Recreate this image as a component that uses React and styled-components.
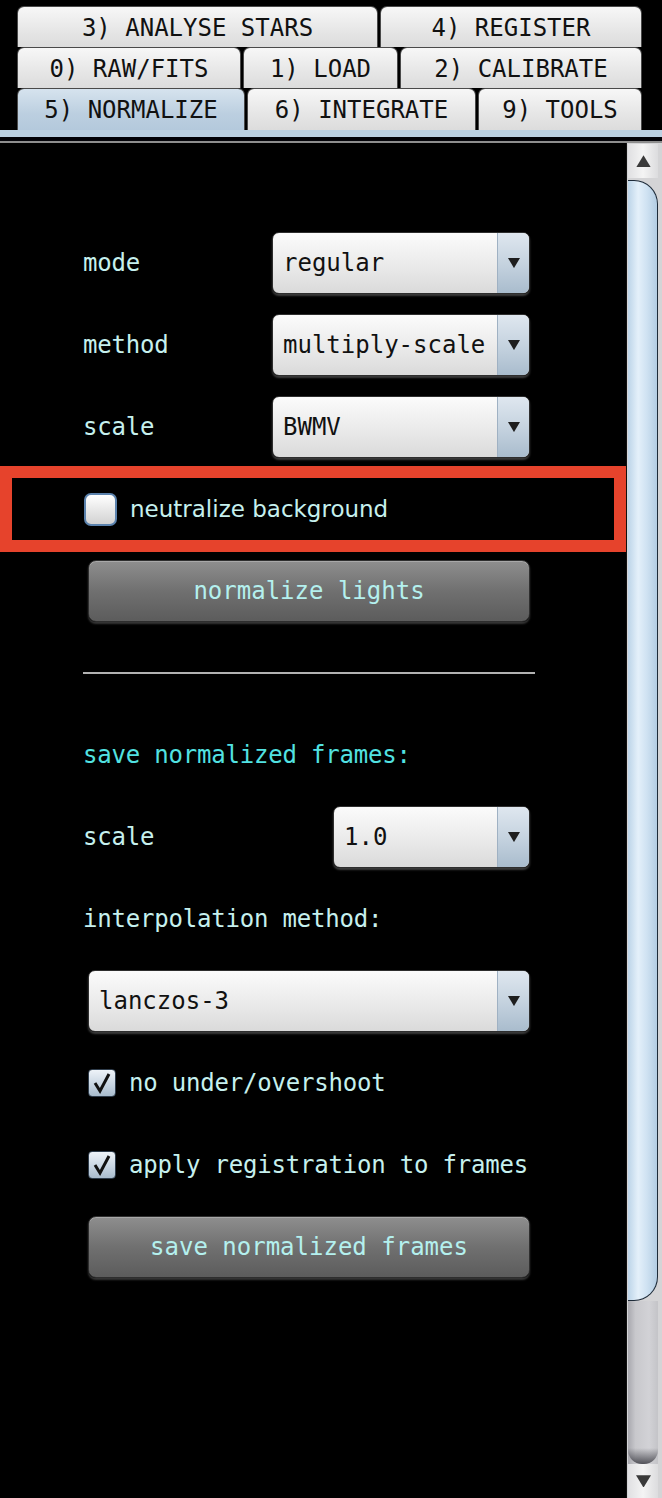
import React from "react";
import styled, { createGlobalStyle } from "styled-components";

const GlobalStyle = createGlobalStyle`
  html, body {
    margin: 0;
    padding: 0;
    background: #000;
  }
  * { box-sizing: border-box; }
`;

const MONO = `"DejaVu Sans Mono", "Liberation Mono", monospace`;
const SANS = `"DejaVu Sans", "Liberation Sans", sans-serif`;

const Screen = styled.div`
  width: 662px;
  height: 1498px;
  display: flex;
  flex-direction: column;
  background: #000;
  overflow: hidden;
`;

const TabBar = styled.div`
  height: 130px;
  padding-top: 6px;
  display: flex;
  flex-direction: column;
`;

const TabRow = styled.div`
  display: flex;
  gap: 2px;
  padding-left: 17px;
  height: ${(p) => p.h || 41}px;
`;

const Tab = styled.div`
  width: ${(p) => p.w}px;
  height: 100%;
  display: flex;
  align-items: center;
  justify-content: center;
  padding-top: 1px;
  border: 1px solid #4a4a4a;
  border-bottom: none;
  border-radius: 7px 7px 0 0;
  background: ${(p) =>
    p.active
      ? "linear-gradient(#d6e3ee, #bccfe0 60%, #b4c9dc)"
      : "linear-gradient(#f7f7f7, #e6e6e6 60%, #dcdcdc)"};
  font-family: ${MONO};
  font-size: 24px;
  color: #111;
  white-space: nowrap;
`;

const TabStrip = styled.div`
  height: 7px;
  background: #bdd2e4;
`;

const TabDivider = styled.div`
  height: 6px;
  background: #05050a;
  border-bottom: 2px solid #8e8e8e;
`;

const Main = styled.div`
  flex: 1;
  display: flex;
  min-height: 0;
`;

const Panel = styled.div`
  flex: 1;
  min-width: 0;
  background: #000;
  padding: 89px 96px 0 83px;
  display: flex;
  flex-direction: column;
  gap: 20px;
`;

const Row = styled.div`
  height: 62px;
  display: flex;
  align-items: center;
  justify-content: space-between;
  padding-left: ${(p) => p.indent || 0}px;
`;

const HighlightRow = styled(Row)`
  margin: 0 -84px 0 -71px;
  padding-left: 72px;
  outline: 12px solid #e6432c;
`;

const Label = styled.span`
  font-family: ${MONO};
  font-size: 24px;
  letter-spacing: -0.2px;
  color: ${(p) => (p.accent ? "#52e2e2" : "#c6f0ee")};
  white-space: nowrap;
`;

const SelectBox = styled.div`
  width: ${(p) => p.w}px;
  height: 62px;
  flex-shrink: 0;
  display: flex;
  border: 1.5px solid #2e2e2e;
  border-radius: 7px;
  overflow: hidden;
  background: linear-gradient(#fbfbfb, #eaeaea 55%, #dadada);
  box-shadow: 0 2px 2px rgba(120, 120, 120, 0.5);
`;

const SelectValue = styled.div`
  flex: 1;
  display: flex;
  align-items: center;
  padding-left: 10px;
  font-family: ${MONO};
  font-size: 24px;
  color: #111;
  white-space: nowrap;
`;

const SelectArrow = styled.div`
  width: 32px;
  display: flex;
  align-items: center;
  justify-content: center;
  border-left: 1px solid #9fb1c3;
  background: linear-gradient(#dfe7ef, #c3d1de 55%, #a9bccd);
`;

const Button = styled.div`
  height: 62px;
  margin-left: 5px;
  display: flex;
  align-items: center;
  justify-content: center;
  border: 1.5px solid #2e2e2e;
  border-radius: 8px;
  background: linear-gradient(#8e8e8e, #707070 50%, #5c5c5c);
  box-shadow: inset 0 1px 0 #a8a8a8, 0 2px 2px rgba(90, 90, 90, 0.6);
  font-family: ${MONO};
  font-size: 24px;
  color: #b4f0ee;
`;

const Separator = styled.div`
  height: 62px;
  margin-right: -5px;
  display: flex;
  align-items: center;
  &::after {
    content: "";
    flex: 1;
    height: 2px;
    background: #b2b2b2;
  }
`;

const CheckLine = styled.div`
  display: flex;
  align-items: center;
  gap: 13px;
`;

const Box = styled.div`
  width: ${(p) => (p.checked ? 28 : 33)}px;
  height: ${(p) => (p.checked ? 28 : 33)}px;
  flex-shrink: 0;
  display: flex;
  align-items: center;
  justify-content: center;
  border-radius: ${(p) => (p.checked ? 4 : 7)}px;
  border: ${(p) => (p.checked ? "1.5px solid #2f3d4c" : "2.5px solid #5b82ad")};
  background: ${(p) =>
    p.checked
      ? "linear-gradient(#eef3f8, #c9d6e3 55%, #a9bccd)"
      : "linear-gradient(#ffffff, #e6e6e6 55%, #d2d2d2)"};
`;

const PropLabel = styled.span`
  font-family: ${SANS};
  font-size: 23px;
  color: #c6f0ee;
  white-space: nowrap;
`;

const Scrollbar = styled.div`
  width: 36px;
  flex-shrink: 0;
  display: flex;
  flex-direction: column;
  padding: 1px 4px 0 1px;
  background: #d4d4d6;
  border-left: 1px solid #111;
`;

const ScrollButton = styled.div`
  height: 34px;
  display: flex;
  align-items: center;
  justify-content: center;
  background: linear-gradient(90deg, #e0e0e2, #f4f4f4 50%, #dcdcde);
`;

const Thumb = styled.div`
  height: 1121px;
  margin-top: 2px;
  border: 1.5px solid #1d2a38;
  border-left: none;
  border-radius: 0 24px 24px 0;
  background: linear-gradient(90deg, #bcd4e8, #e4f0fa 35%, #cfe2f2 65%, #b3cce2);
`;

const Track = styled.div`
  flex: 1;
  background: linear-gradient(90deg, #a8a8ae, #c8c8cc 25%, #d2d2d6 70%, #c4c4c8);
  position: relative;
  &::after {
    content: "";
    position: absolute;
    left: 0;
    right: 0;
    bottom: 0;
    height: 16px;
    background: linear-gradient(rgba(0, 0, 0, 0), rgba(40, 40, 48, 0.75));
    border-radius: 0 0 14px 14px;
  }
`;

const Triangle = ({ dir = "down", size = 12, color = "#1e1e1e" }) => (
  <svg width={size} height={size * 0.85} viewBox="0 0 12 10">
    {dir === "down" ? (
      <polygon points="0,0 12,0 6,10" fill={color} />
    ) : (
      <polygon points="6,0 12,10 0,10" fill={color} />
    )}
  </svg>
);

const CheckMark = () => (
  <svg width="22" height="22" viewBox="0 0 22 22">
    <polyline
      points="4,11 9,19 18,2"
      fill="none"
      stroke="#111"
      strokeWidth="3"
      strokeLinejoin="miter"
    />
  </svg>
);

const Select = ({ value, w }) => (
  <SelectBox w={w}>
    <SelectValue>{value}</SelectValue>
    <SelectArrow>
      <Triangle />
    </SelectArrow>
  </SelectBox>
);

const tabRows = [
  [
    { label: "3) ANALYSE STARS", w: 361 },
    { label: "4) REGISTER", w: 262 },
  ],
  [
    { label: "0) RAW/FITS", w: 224 },
    { label: "1) LOAD", w: 155 },
    { label: "2) CALIBRATE", w: 242 },
  ],
  [
    { label: "5) NORMALIZE", w: 228, active: true },
    { label: "6) INTEGRATE", w: 229 },
    { label: "9) TOOLS", w: 164 },
  ],
];

export default function App() {
  return (
    <>
      <GlobalStyle />
      <Screen>
        <TabBar>
          {tabRows.map((row, i) => (
            <TabRow key={i} h={i === 2 ? 42 : 41}>
              {row.map((t) => (
                <Tab key={t.label} w={t.w} active={t.active}>
                  {t.label}
                </Tab>
              ))}
            </TabRow>
          ))}
        </TabBar>
        <TabStrip />
        <TabDivider />
        <Main>
          <Panel>
            <Row>
              <Label>mode</Label>
              <Select value="regular" w={258} />
            </Row>
            <Row>
              <Label>method</Label>
              <Select value="multiply-scale" w={258} />
            </Row>
            <Row>
              <Label>scale</Label>
              <Select value="BWMV" w={258} />
            </Row>
            <HighlightRow>
              <CheckLine>
                <Box />
                <PropLabel>neutralize background</PropLabel>
              </CheckLine>
            </HighlightRow>
            <Button>normalize lights</Button>
            <Separator />
            <Row>
              <Label accent>save normalized frames:</Label>
            </Row>
            <Row>
              <Label>scale</Label>
              <Select value="1.0" w={197} />
            </Row>
            <Row>
              <Label>interpolation method:</Label>
            </Row>
            <Row indent={5}>
              <Select value="lanczos-3" w={442} />
            </Row>
            <Row indent={5}>
              <CheckLine>
                <Box checked>
                  <CheckMark />
                </Box>
                <Label>no under/overshoot</Label>
              </CheckLine>
            </Row>
            <Row indent={5}>
              <CheckLine>
                <Box checked>
                  <CheckMark />
                </Box>
                <Label>apply registration to frames</Label>
              </CheckLine>
            </Row>
            <Button>save normalized frames</Button>
          </Panel>
          <Scrollbar>
            <ScrollButton>
              <Triangle dir="up" size={15} color="#3a3a3a" />
            </ScrollButton>
            <Thumb />
            <Track />
            <ScrollButton>
              <Triangle dir="down" size={15} color="#3a3a3a" />
            </ScrollButton>
          </Scrollbar>
        </Main>
      </Screen>
    </>
  );
}
